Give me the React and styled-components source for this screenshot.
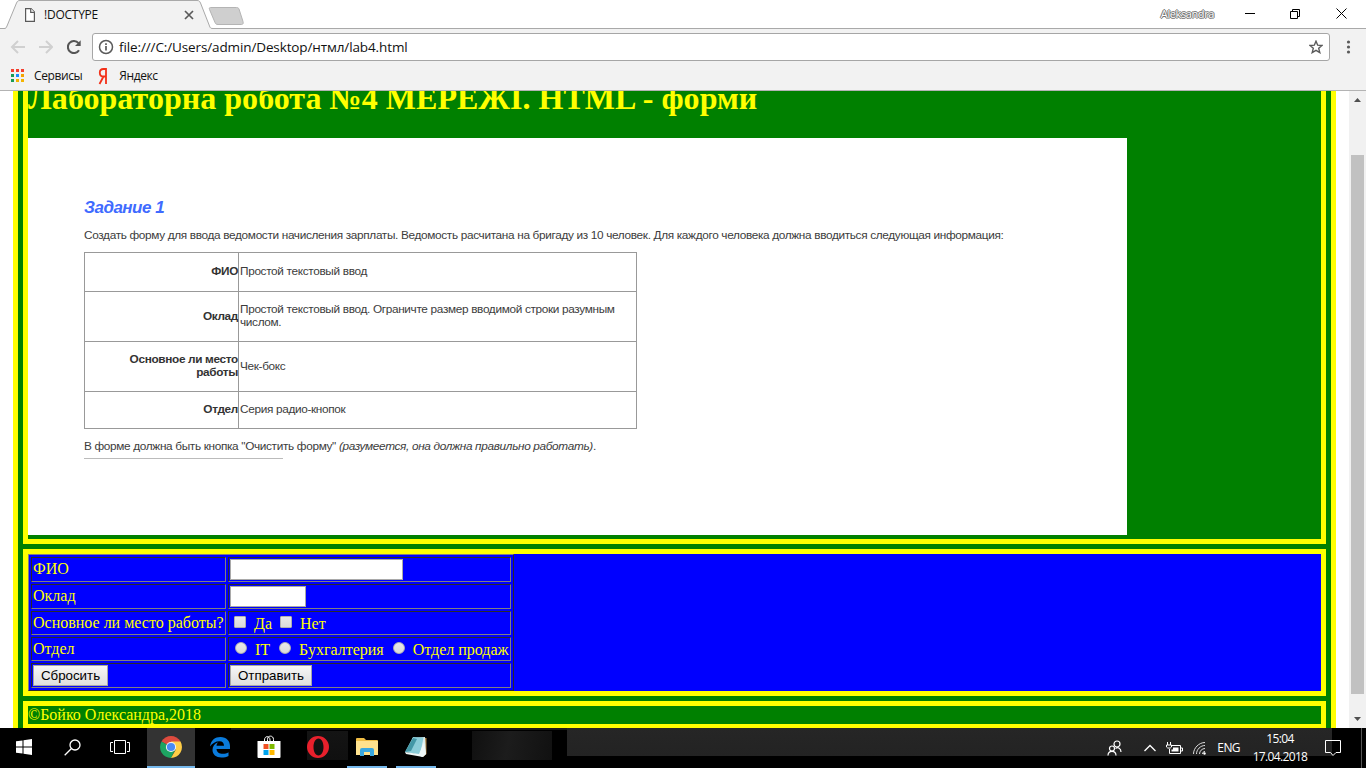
import React from "react";
import styled, { createGlobalStyle } from "styled-components";

const Global = createGlobalStyle`
  *, *::before, *::after { box-sizing: border-box; }
  body { margin: 0; background: #fff; }
`;

const ui = `"Open Sans", "Noto Sans", sans-serif`;

const Screen = styled.div`
  width: 1366px;
  height: 768px;
  display: flex;
  flex-direction: column;
  overflow: hidden;
  white-space: nowrap;
`;

const Label = styled.span`
  font-family: ${ui};
  font-size: ${(p) => p.$size || 12}px;
  letter-spacing: ${(p) => p.$ls || 0}px;
  line-height: 16px;
  color: ${(p) => p.$color || "#111"};
`;

/* ---- browser frame ---- */
const TitleBar = styled.header`
  height: 29px;
  flex: none;
  display: flex;
  background: linear-gradient(#fff 28px, #a9a9a9 28px);
`;
const Tab = styled.div`
  position: relative;
  width: 208px;
  height: 29px;
  display: flex;
  align-items: center;
  padding: 1px 0 0 25px;
`;
const TabShape = styled.svg`
  position: absolute;
  left: 0;
  top: 0;
`;
const TabBody = styled.div`
  position: relative;
  display: flex;
  align-items: center;
  flex: 1;
  padding-right: 14px;
  gap: 9px;
  & > :last-child { margin-left: auto; }
`;
const WindowControls = styled.div`
  margin-left: auto;
  display: flex;
  align-items: center;
  height: 27px;
  padding-right: 19px;
`;
const UserName = styled(Label)`
  margin-right: 31px;
  text-shadow: 0 0 1px #666, 1px 0 0 #777, -1px 0 0 #777, 0 1px 0 #777, 0 -1px 0 #777;
`;
const WindowIcon = styled.svg`
  margin-left: ${(p) => p.$gap || 0}px;
`;
const Toolbar = styled.div`
  height: 33px;
  flex: none;
  display: flex;
  align-items: center;
  padding: 3px 0 0 10px;
  background: #f2f2f2;
`;
const NavIcon = styled.svg`
  margin-right: ${(p) => p.$gap}px;
  flex: none;
`;
const Omnibox = styled.div`
  width: 1238px;
  height: 28px;
  flex: none;
  display: flex;
  align-items: center;
  padding: 0 6px 0 5px;
  gap: 5px;
  background: #fff;
  border: 1px solid #a6a6a6;
  border-radius: 3px;
  & > :last-child { margin-left: auto; }
`;
const Bookmarks = styled.nav`
  height: 29px;
  flex: none;
  display: flex;
  align-items: center;
  padding-left: 10px;
  background: #f2f2f2;
  border-bottom: 1px solid #b3b3b3;
`;

/* ---- page ---- */
const Viewport = styled.main`
  height: 637px;
  flex: none;
  display: flex;
  overflow: hidden;
`;
const Page = styled.div`
  width: 1323px;
  margin: 0 13px;
  padding: 0 5px;
  flex: none;
  display: flex;
  flex-direction: column;
  gap: 5px;
  background: #008000;
  border: solid #ff0;
  border-width: 0 5px;
  color: #ff0;
  font-family: "Liberation Serif", serif;
  font-size: 16px;
`;
const Section = styled.section`
  flex: none;
  height: ${(p) => p.$h}px;
  background: ${(p) => p.$bg || "#008000"};
  border: 5px solid #ff0;
  ${(p) => p.$open && "border-top: 0;"}
`;
const Heading = styled.h1`
  height: 47px;
  margin: -11px 0 11px;
  font-size: 32px;
  line-height: 36px;
  letter-spacing: 0.03px;
`;
const Sheet = styled.article`
  width: 1099px;
  height: 397px;
  padding: 60px 0 0 56px;
  background: #fff;
  color: #3c3c3c;
  font-family: "Liberation Sans", sans-serif;
  font-size: 11.8px;
  letter-spacing: -0.33px;
  line-height: 13px;
`;
const TaskTitle = styled.h2`
  margin: 0;
  color: #3f6bff;
  font-size: 17px;
  line-height: 20px;
  font-style: italic;
  letter-spacing: -0.5px;
`;
const Para = styled.p`
  margin: ${(p) => p.$mt}px 0 0;
  height: 14px;
`;
const SpecTable = styled.div`
  width: 553px;
  height: 177px;
  margin-top: 9px;
  display: grid;
  grid-template-columns: 153px 397px;
  grid-template-rows: 38px 49px 49px 36px;
  gap: 1px;
  padding: 1px;
  background: #999;
`;
const SpecCell = styled.div`
  background: #fff;
  display: flex;
  align-items: center;
  padding: 0 0 1px 1px;
  ${(p) => p.$head && "justify-content: flex-end; text-align: right; font-weight: 700; padding-left: 0; color: #333;"}
`;
const Rule = styled.div`
  width: 199px;
  height: 1px;
  margin-top: 4px;
  background: #bbb;
`;

const FormTable = styled.form`
  width: 486px;
  height: 137px;
  display: grid;
  grid-template-columns: 195px 283px;
  grid-template-rows: 25px 25px 24px 24px 25px;
  gap: 2px;
  padding: 2px;
  border: 1px solid;
  border-color: #808080 #2b2b2b #2b2b2b #808080;
`;
const FormCell = styled.div`
  display: flex;
  align-items: center;
  padding: 0 1px ${(p) => p.$pb || 0}px;
  border: 1px solid;
  border-color: #2b2b2b #808080 #808080 #2b2b2b;
`;
const Field = styled.input`
  width: ${(p) => p.$w}px;
  height: 21px;
  margin: 0;
  border: 1px solid #a9a9a9;
  background: #fff;
`;
const Check = styled.input`
  appearance: none;
  flex: none;
  width: 12px;
  height: 12px;
  margin: -3px ${(p) => p.$r}px 0 ${(p) => p.$l}px;
  border: 1px solid #b0b0b0;
  border-radius: ${(p) => (p.type === "radio" ? "50%" : "1px")};
  background: linear-gradient(#e8e8e8, #dadada);
`;
const Choice = styled.span`
  padding-top: 2px;
`;
const Button = styled.button`
  width: ${(p) => p.$w}px;
  height: 21px;
  padding: 0;
  border: 1px solid #a6a6a6;
  background: linear-gradient(#f6f6f6, #dedede);
  color: #000;
  font: 13.33px/17px "Liberation Sans", sans-serif;
`;
const Scrollbar = styled.aside`
  width: 17px;
  flex: none;
  display: flex;
  flex-direction: column;
  align-items: center;
  background: #f1f1f1;
`;
const Thumb = styled.div`
  width: 13px;
  height: 539px;
  margin: 47px 0 auto;
  background: #c1c1c1;
`;

/* ---- taskbar ---- */
const Taskbar = styled.footer`
  height: 40px;
  flex: none;
  display: flex;
  background:
    linear-gradient(#262626, #232323) 567px 0 / 765px 28px no-repeat,
    linear-gradient(#1b1b1b, #1b1b1b) 231px 0 / 336px 2px no-repeat,
    linear-gradient(100deg, #101010, #1c1c1c 45%, #111) 472px 3px / 80px 29px no-repeat,
    linear-gradient(#141414, #101010) 307px 3px / 41px 29px no-repeat,
    #000;
`;
const Task = styled.div`
  width: ${(p) => p.$w || 48}px;
  height: 40px;
  margin-right: ${(p) => p.$r || 0}px;
  display: flex;
  align-items: center;
  justify-content: center;
  flex: none;
  background: ${(p) => (p.$active ? "#333" : "transparent")};
  border-bottom: 2px solid ${(p) => (p.$open ? "#76b9ed" : "transparent")};
`;
const Tray = styled.div`
  margin-left: auto;
  display: flex;
  align-items: center;
  padding-right: 4px;
`;
const TrayIcon = styled.svg`
  margin-right: ${(p) => p.$r}px;
  flex: none;
`;
const Clock = styled.div`
  width: 56px;
  display: flex;
  flex-direction: column;
  align-items: center;
  gap: 2px;
  margin: 0 17px 0 12px;
`;
const ShowDesktop = styled.div`
  width: 1px;
  height: 40px;
  background: #555;
`;

const appColors = ["#f4402f", "#f4402f", "#f4402f", "#1a9c55", "#1a8cff", "#f4a300", "#1a9c55", "#f4b400", "#f4b400"];

function Browser() {
  return (
    <>
      <TitleBar>
        <Tab>
          <TabShape width="214" height="29">
            <path d="M0 29V28.5H4C6 28.5 6 28 7 26L16.5 3C17.5 1 18 .5 20 .5H197C199 .5 199.500 1 200.500 3L209.500 26C210 28 211 28.500 213 28.500H214V29Z" fill="#f2f2f2" />
            <path d="M0 28.500H4C6 28.500 6 28 7 26L16.500 3C17.500 1 18 .5 20 .5H197C199 .5 199.500 1 200.500 3L209.500 26C210 28 211 28.500 213 28.500H214" fill="none" stroke="#a9a9a9" />
          </TabShape>
          <TabBody>
            <svg width="10" height="14" viewBox="0 0 10 14" fill="#fff" stroke="#5a5a5a" strokeWidth="1.200"><path d="M.6.600H6L9.400 4V13.400H.6Z" /><path d="M5.700.6V4.300H9.400" /></svg>
            <Label $ls={-0.25}>!DOCTYPE</Label>
            <svg width="10" height="10" stroke="#5a5a5a" strokeWidth="1.700"><path d="M1 1L9 9M9 1L1 9" /></svg>
          </TabBody>
        </Tab>
        <svg width="37" height="28"><path d="M2.500 7.500H28.500C30 7.500 30.500 8 31 9L35 21.500C35.500 23.500 35 24.500 33.500 24.500H10C8.500 24.500 7.500 24 7 22.500L1.500 9.500C1 8 1.500 7.500 2.500 7.500Z" fill="#cfcfcf" stroke="#b4b4b4" /></svg>
        <WindowControls>
          <UserName $size={11} $ls={-0.4} $color="#fff">Aleksandra</UserName>
          <WindowIcon width="10" height="10" stroke="#000"><path d="M0 4.500H10" /></WindowIcon>
          <WindowIcon $gap={35} width="10" height="10" fill="none" stroke="#000"><path d="M.5 2.500H7.500V9.500H.5ZM2.500 2.500V.5H9.500V7.500H7.500" /></WindowIcon>
          <WindowIcon $gap={36} width="11" height="11" stroke="#000"><path d="M.5 .5L10.500 10.500M10.500 .5L.5 10.500" /></WindowIcon>
        </WindowControls>
      </TitleBar>
      <Toolbar>
        <NavIcon $gap={13} width="15" height="14" fill="none" stroke="#d0d0d0" strokeWidth="2"><path d="M15 7H2M8 1L2 7L8 13" /></NavIcon>
        <NavIcon $gap={14} width="15" height="14" fill="none" stroke="#d0d0d0" strokeWidth="2"><path d="M1 7H14M8 1L14 7L8 13" /></NavIcon>
        <NavIcon $gap={11} width="14" height="14"><path d="M12 10.200A6 6 0 1 1 11.500 3.200" fill="none" stroke="#555" strokeWidth="2.100" /><path d="M13.700.3V6H8Z" fill="#555" /></NavIcon>
        <Omnibox>
          <svg width="16" height="16" fill="none" stroke="#5a5a5a" strokeWidth="1.500"><circle cx="8" cy="8" r="6.500" /><path d="M8 7V11.500M8 4.300V6" strokeWidth="1.700" /></svg>
          <Label $size={13.5} $ls={-0.12}>file:///C:/Users/admin/Desktop/нтмл/lab4.html</Label>
          <svg width="14" height="14" viewBox="0 0 14 14" fill="none" stroke="#5a5a5a" strokeWidth="1.400"><path d="M7 1.200L8.700 5.200L13 5.500L9.700 8.300L10.800 12.600L7 10.300L3.200 12.600L4.300 8.300L1 5.500L5.300 5.200Z" /></svg>
        </Omnibox>
        <svg width="36" height="14" fill="#5a5a5a"><circle cx="18.500" cy="2" r="1.600" /><circle cx="18.500" cy="7" r="1.600" /><circle cx="18.500" cy="12" r="1.600" /></svg>
      </Toolbar>
      <Bookmarks>
        <NavIcon $gap={10} width="14" height="14">
          {appColors.map((c, i) => <rect key={i} x={1 + (i % 3) * 5} y={Math.floor(i / 3) * 5} width="3" height="3" fill={c} />)}
        </NavIcon>
        <Label $ls={-0.4}>Сервисы</Label>
        <svg width="37" height="18" fill="none" stroke="#f33018" strokeWidth="1.800"><path d="M24 17V2H21.500C18.800 2 17.800 3.800 17.800 5.700C17.800 8 19 9.500 21.500 9.500H24M21.500 9.500L17.500 17" /></svg>
        <Label $ls={-0.4}>Яндекс</Label>
      </Bookmarks>
    </>
  );
}

const spec = [
  ["ФИО", "Простой текстовый ввод"],
  ["Оклад", <>Простой текстовый ввод. Ограничте размер вводимой строки разумным<br />числом.</>],
  [<>Основное ли место<br />работы</>, "Чек-бокс"],
  ["Отдел", "Серия радио-кнопок"],
];

export default function App() {
  return (
    <Screen>
      <Global />
      <Browser />
      <Viewport>
        <Page>
          <Section $open $h={453}>
            <Heading>Лабораторна робота №4 МЕРЕЖІ. HTML - форми</Heading>
            <Sheet>
              <TaskTitle>Задание 1</TaskTitle>
              <Para $mt={11}>Создать форму для ввода ведомости начисления зарплаты. Ведомость расчитана на бригаду из 10 человек. Для каждого человека должна вводиться следующая информация:</Para>
              <SpecTable>
                {spec.map(([a, b], i) => (
                  <React.Fragment key={i}>
                    <SpecCell $head><span>{a}</span></SpecCell>
                    <SpecCell><span>{b}</span></SpecCell>
                  </React.Fragment>
                ))}
              </SpecTable>
              <Para $mt={11}>В форме должна быть кнопка "Очистить форму" <i>(разумеется, она должна правильно работать)</i>.</Para>
              <Rule />
            </Sheet>
          </Section>
          <Section $h={147} $bg="#00f">
            <FormTable>
              <FormCell $pb={1}>ФИО</FormCell>
              <FormCell><Field $w={173} /></FormCell>
              <FormCell $pb={1}>Оклад</FormCell>
              <FormCell><Field $w={76} /></FormCell>
              <FormCell>Основное ли место работы?</FormCell>
              <FormCell>
                <Check type="checkbox" $l={4} $r={8} /><Choice>Да</Choice>
                <Check type="checkbox" $l={8} $r={8} /><Choice>Нет</Choice>
              </FormCell>
              <FormCell>Отдел</FormCell>
              <FormCell>
                <Check type="radio" $l={5} $r={8} /><Choice>IT</Choice>
                <Check type="radio" $l={9} $r={8} /><Choice>Бухгалтерия</Choice>
                <Check type="radio" $l={9} $r={8} /><Choice>Отдел продаж</Choice>
              </FormCell>
              <FormCell><Button type="button" $w={75}>Сбросить</Button></FormCell>
              <FormCell><Button type="button" $w={82}>Отправить</Button></FormCell>
            </FormTable>
          </Section>
          <Section $h={28}>©Бойко Олександра,2018</Section>
        </Page>
        <Scrollbar>
          <svg width="17" height="17" fill="#505050"><path d="M5 11L8.500 7L12 11Z" /></svg>
          <Thumb />
          <svg width="17" height="17" fill="#505050"><path d="M5 6L8.500 10L12 6Z" /></svg>
        </Scrollbar>
      </Viewport>
      <Taskbar>
        <Task>
          <svg width="16" height="16" fill="#fff"><path d="M0 2.300L6.500 1.400V7.500H0ZM7.500 1.200L16 0V7.500H7.500ZM0 8.500H6.500V14.600L0 13.700ZM7.500 8.500H16V16L7.500 14.800Z" /></svg>
        </Task>
        <Task>
          <svg width="17" height="17" fill="none" stroke="#fff" strokeWidth="1.300"><circle cx="11" cy="6" r="5" /><path d="M7.500 9.500L.7 16.300" /></svg>
        </Task>
        <Task $r={3}>
          <svg width="20" height="14" fill="none" stroke="#fff"><path d="M4.500 .5H15.500V13.500H4.500ZM3 2.500H.5V11.500H3M17 2.500H19.500V11.500H17" /></svg>
        </Task>
        <Task $active $open>
          <svg width="22" height="22" viewBox="0 0 22 22">
            <path d="M11 11L1.500 5.500A11 11 0 0 1 20.500 5.500Z" fill="#dd4b3e" />
            <path d="M11 11L1.500 5.500A11 11 0 0 0 11 22L15.500 13Z" fill="#1da462" />
            <path d="M20.500 5.500H11L15.700 13.800L11 22A11 11 0 0 0 20.500 5.500Z" fill="#ffcd46" />
            <circle cx="11" cy="11" r="5.100" fill="#f4f4f4" /><circle cx="11" cy="11" r="4.100" fill="#4a8af4" />
          </svg>
        </Task>
        <Task $w={50}>
          <svg width="20" height="21" viewBox="0 0 20 21"><path d="M0 9.500C1 3 5 0 10.500 0C16.500 0 20 4 20 9V12H6.500C6.800 15.500 9.500 16.800 12.700 16.800C15 16.800 17 16.200 18.500 15.200V19C16.500 20 14 20.500 11.500 20.500C6 20.500 2.500 17.500 2.500 13C2.500 9.500 4.500 6.800 8 5.300C7 6.500 6.600 7.800 6.500 8.700H14C14 6 12.600 4.200 9.500 4.200C5.800 4.200 2.300 6.200 0 9.500Z" fill="#0a7bdc" /></svg>
        </Task>
        <Task>
          <svg width="24" height="24" viewBox="0 0 24 24"><path d="M7.500 7V5C7.500 .5 13 .5 13 5V7M10.500 7V4.500C10.500 0 16.500 0 16.500 4.500V7" fill="none" stroke="#fff" /><path d="M.5 6H23.500V22Q23.500 23 22.500 23H1.500Q.5 23 .5 22Z" fill="#fff" /><path d="M6.500 9H11.500V14H6.500Z" fill="#f05022" /><path d="M12.500 9H17.500V14H12.500Z" fill="#7fba00" /><path d="M6.500 15H11.500V20H6.500Z" fill="#00a4ef" /><path d="M12.500 15H17.500V20H12.500Z" fill="#ffb900" /></svg>
        </Task>
        <Task $w={50} $r={4}>
          <svg width="22" height="22" viewBox="0 0 22 22"><path fillRule="evenodd" d="M11 0A11 11 0 1 1 11 22A11 11 0 1 1 11 0ZM11.500 2.500C8.500 2.500 6.500 6.500 6.500 11S8.500 19.500 11.500 19.500S16.500 15.500 16.500 11S14.500 2.500 11.500 2.500Z" fill="#e8202c" /></svg>
        </Task>
        <Task $w={40} $open $r={9}>
          <svg width="22" height="18" viewBox="0 0 22 18"><path d="M0 1Q0 0 1 0H8L10 2H21Q22 2 22 3V17H0Z" fill="#f0bd45" /><path d="M0 3H22V17H0Z" fill="#ffe28e" /><path d="M4 18V12Q4 10 6 10H16Q18 10 18 12V18H14V14H8V18Z" fill="#3aa8e0" /></svg>
        </Task>
        <Task $w={40} $open>
          <svg width="24" height="22" viewBox="0 0 24 22"><path d="M20 2H22.500V18L19 21Z" fill="#ad8041" /><path d="M8 2L21 1L22 18L18 21L13 18Z" fill="#dceeee" /><path d="M9 1L19.500 1.500L16 19L1 16Z" fill="#8accd8" /><path d="M9 2L13 3L7 15L1 16Z" fill="#4397a6" /><path d="M1 16L15 18L20 6L22 18L19 21L2 18Z" fill="#eef7f7" /></svg>
        </Task>
        <Tray>
          <TrayIcon $r={22} width="15" height="16" fill="none" stroke="#fff" strokeWidth="1.200"><circle cx="10" cy="4" r="3" /><circle cx="5" cy="8.500" r="2.500" /><path d="M1 15.500C1 10 9 10 9 15.500M8.500 8.500C11 6.500 14 8.500 14 12" /></TrayIcon>
          <TrayIcon $r={10} width="12" height="8" fill="none" stroke="#fff" strokeWidth="1.300"><path d="M.5 7L6 1.500L11.500 7" /></TrayIcon>
          <TrayIcon $r={10} width="17" height="13" fill="none" stroke="#fff"><path d="M5.500 3.500H14.500V11.500H3.500V7M15 6H16.500V9H15M1.500 0V3M4.500 0V3M.5 3H5.500V5C5 6.500 1 6.500 .5 5Z" /><path d="M7 5.500H12.500V9.500H5.500V7.500H7Z" fill="#fff" stroke="none" /></TrayIcon>
          <TrayIcon $r={11} width="13" height="13" fill="none" stroke="#ddd"><path d="M.5 12C.5 6 6 .5 12 .5M3.500 12C3.500 7.500 7.500 3.500 12 3.500M6.500 12C6.500 9 9 6.500 12 6.500M9.500 12C9.500 10.500 10.500 9.500 12 9.500" /><circle cx="11.500" cy="11.500" r="1.200" fill="#fff" stroke="none" /></TrayIcon>
          <Label $color="#fff" $ls={-0.6}>ENG</Label>
          <Clock><Label $color="#fff" $ls={-0.6}>15:04</Label><Label $color="#fff" $ls={-0.65}>17.04.2018</Label></Clock>
          <TrayIcon $r={20} width="16" height="16" fill="none" stroke="#fff"><path d="M.5 .5H15.500V12.500H11L8 15.500L5.500 12.500H.5Z" /></TrayIcon>
          <ShowDesktop />
        </Tray>
      </Taskbar>
    </Screen>
  );
}
